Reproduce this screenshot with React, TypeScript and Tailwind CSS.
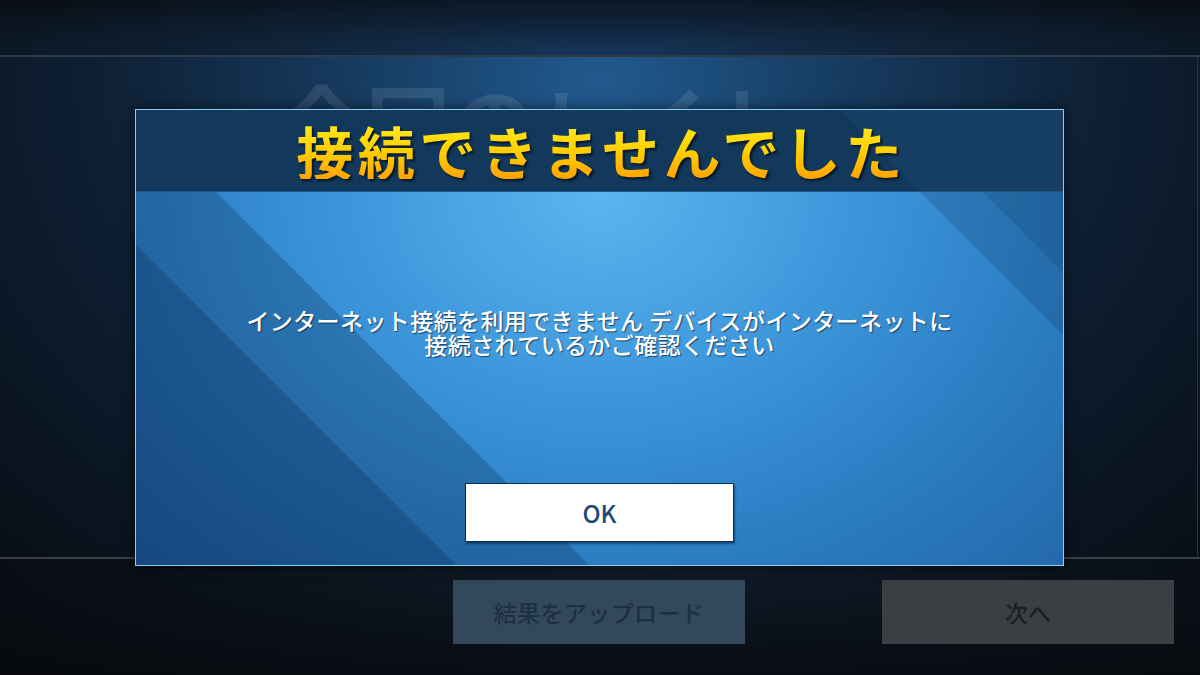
import React from "react";

const font = { fontFamily: '"Noto Sans CJK JP", "Noto Sans", sans-serif' };

const BodyStripes = () => (
  <svg className="absolute inset-0 h-full w-full" viewBox="0 0 927 373" preserveAspectRatio="none">
    <polygon points="0,0 80,0 453,373 0,373" fill="rgba(0,22,55,0.22)" />
    <polygon points="0,53 320,373 0,373" fill="rgba(0,22,55,0.2)" />
    <polygon points="784,0 927,0 927,143" fill="rgba(0,22,55,0.16)" />
    <polygon points="847,0 927,0 927,80" fill="rgba(0,22,55,0.12)" />
  </svg>
);

const HeaderStripes = () => (
  <svg className="absolute inset-0 h-full w-full" viewBox="0 0 927 82" preserveAspectRatio="none">
    <polygon points="704,0 927,0 927,82 784,82" fill="rgba(120,180,230,0.06)" />
  </svg>
);

const ErrorDialog = () => (
  <div className="absolute left-[135px] top-[109px] flex h-[457px] w-[929px] flex-col border border-[#8ccdf2] shadow-[0_0_12px_rgba(0,0,0,0.6)]">
    <div className="relative flex h-[82px] items-center justify-center border-b border-[#1f5583] bg-[#12385b]">
      <HeaderStripes />
      <h1 className="relative bg-gradient-to-b from-[#ffea1a] via-[#ffd000] to-[#ffa300] bg-clip-text pl-[4px] text-[57px] font-semibold leading-none tracking-[4.5px] text-transparent drop-shadow-[2px_2px_1px_rgba(5,15,30,0.85)]">
        接続できませんでした
      </h1>
    </div>
    <div className="relative flex flex-1 flex-col items-center bg-[radial-gradient(ellipse_at_50%_0%,#5cb5ee_0%,#3c95da_40%,#2b7cc1_72%,#2469ab_100%)] pb-[23px] pt-[116px]">
      <BodyStripes />
      <p className="relative text-center text-[23px] font-medium leading-[24px] tracking-[0.4px] text-white [text-shadow:1px_1px_1px_rgba(10,30,60,0.7)]">
        インターネット接続を利用できません デバイスがインターネットに
        <br />
        接続されているかご確認ください
      </p>
      <button className="relative mt-auto flex h-[59px] w-[269px] items-center justify-center border border-[#0d2b4b] bg-white text-[24px] font-medium text-[#1f4777] shadow-[1px_2px_2px_rgba(0,20,45,0.5)]">
        OK
      </button>
    </div>
  </div>
);

export default function App() {
  return (
    <div style={font} className="relative flex h-[675px] w-[1200px] flex-col overflow-hidden bg-[#080c12]">
      {/* top band */}
      <div className="h-[57px] shrink-0 border-b-2 border-[#2e3a47] bg-[radial-gradient(ellipse_at_50%_100%,#17365a_0%,#0f2135_45%,#090d13_100%)]" />

      {/* results area behind the dialog */}
      <div className="relative h-[502px] shrink-0 border-b-2 border-[#3a4048] bg-[radial-gradient(ellipse_at_50%_5%,#215a8f_0%,#163a5e_30%,#0e1f33_60%,#090f17_100%)]">
        <div className="pl-[280px] pt-[22px] text-[84px] font-bold leading-none tracking-[2px] text-white/10">
          今回のレイト
        </div>
        <div className="absolute right-[2px] top-0 h-full w-px bg-[#2c3440]" />
      </div>

      {/* bottom buttons */}
      <div className="flex flex-1 items-start bg-[radial-gradient(ellipse_at_55%_0%,#101c2a_0%,#0a1018_55%,#07090d_100%)] pl-[453px] pt-[21px]">
        <button className="flex h-[64px] w-[292px] items-center justify-center bg-[#34485b] text-[23px] font-medium tracking-[0.4px] text-[#1c3044]">
          結果をアップロード
        </button>
        <button className="ml-[137px] flex h-[64px] w-[292px] items-center justify-center bg-[#3b3e43] text-[23px] font-medium text-[#1c1f23]">
          次へ
        </button>
      </div>

      <ErrorDialog />
    </div>
  );
}
